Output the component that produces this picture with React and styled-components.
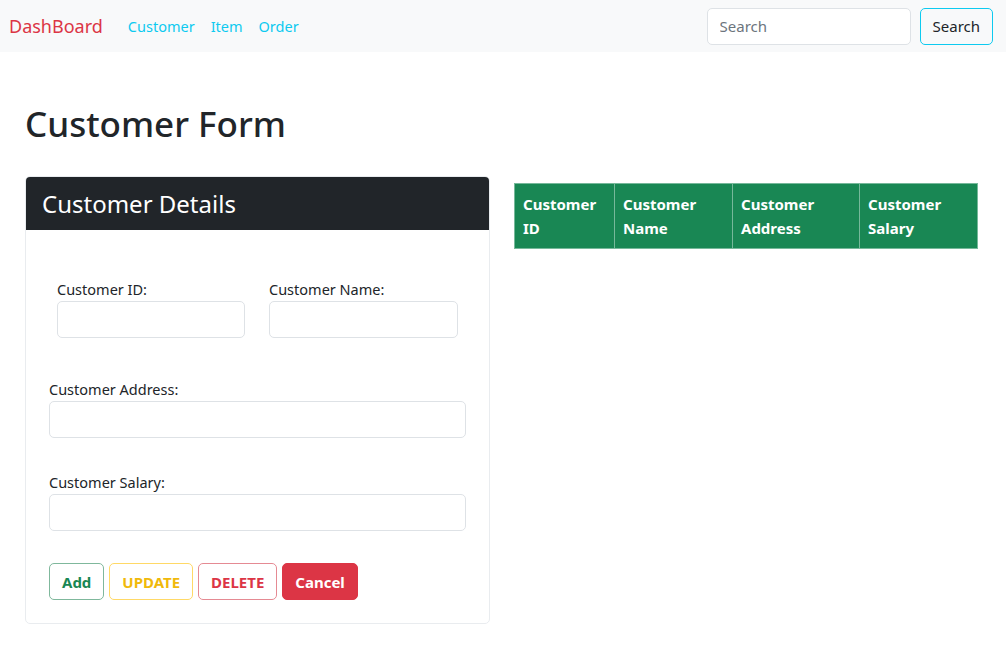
import React from 'react';
import styled, { createGlobalStyle } from 'styled-components';

const GlobalStyle = createGlobalStyle`
    * { box-sizing: border-box; }
    body {
        margin: 0;
        font-family: 'Noto Sans', 'Open Sans', sans-serif;
        color: #212529;
        background: #fff;
        font-size: 16px;
    }
`;

const fields = [
    { id: 'cid', label: 'Customer ID:' },
    { id: 'cname', label: 'Customer Name:' },
];

const columns = [
    ['Customer', 'ID', 100],
    ['Customer', 'Name', 118],
    ['Customer', 'Address', 127],
    ['Customer', 'Salary', 118],
];

const App = () => (
    <>
        <GlobalStyle />
        <NavBar>
            <Brand>DashBoard</Brand>
            <NavLinks>
                <NavLink>Customer</NavLink>
                <NavLink>Item</NavLink>
                <NavLink>Order</NavLink>
            </NavLinks>
            <SearchForm>
                <SearchInput placeholder="Search" />
                <SearchButton>Search</SearchButton>
            </SearchForm>
        </NavBar>

        <Main>
            <Title>Customer Form</Title>
            <Content>
                <Card>
                    <CardHeader>Customer Details</CardHeader>
                    <CardBody>
                        <TwoCols>
                            {fields.map((f) => (
                                <Field key={f.id}>
                                    <Label>{f.label}</Label>
                                    <Input />
                                </Field>
                            ))}
                        </TwoCols>
                        <Field space={34}>
                            <Label>Customer Address:</Label>
                            <Input />
                        </Field>
                        <Field space={32}>
                            <Label>Customer Salary:</Label>
                            <Input />
                        </Field>
                        <Buttons>
                            <Btn variant="success">Add</Btn>
                            <Btn variant="warning">UPDATE</Btn>
                            <Btn variant="danger">DELETE</Btn>
                            <Btn variant="danger" solid>
                                Cancel
                            </Btn>
                        </Buttons>
                    </CardBody>
                </Card>

                <Table>
                    <thead>
                        <tr>
                            {columns.map(([a, b, w]) => (
                                <Th key={b} style={{ width: w }}>
                                    {a}
                                    <br />
                                    {b}
                                </Th>
                            ))}
                        </tr>
                    </thead>
                </Table>
            </Content>
        </Main>
    </>
);

const NavBar = styled.nav`
    height: 52px;
    background: #f8f9fa;
    display: flex;
    align-items: center;
    padding: 0 13px 0 9px;
`;

const Brand = styled.span`
    color: #dc3545;
    font-size: 18px;
    margin-right: 25px;
`;

const NavLinks = styled.div`
    display: flex;
    gap: 16px;
    flex: 1;
`;

const NavLink = styled.a`
    color: #0dcaf0;
    font-size: 14.5px;
    cursor: pointer;
`;

const SearchForm = styled.div`
    display: flex;
    gap: 9px;
`;

const SearchInput = styled.input`
    width: 204px;
    height: 37px;
    border: 1px solid #dee2e6;
    border-radius: 5px;
    padding: 0 12px;
    font: inherit;
    font-size: 15px;
    &::placeholder { color: #6c757d; }
`;

const SearchButton = styled.button`
    height: 37px;
    padding: 0 12px;
    background: transparent;
    border: 1px solid #0dcaf0;
    border-radius: 5px;
    font: inherit;
    font-size: 15px;
    color: #212529;
`;

const Main = styled.main`
    padding: 51px 25px 0;
`;

const Title = styled.h1`
    margin: 0 0 31px;
    font-size: 35px;
    font-weight: 500;
    line-height: 1.2;
`;

const Content = styled.div`
    display: flex;
    align-items: flex-start;
    gap: 24px;
`;

const Card = styled.section`
    width: 465px;
    border: 1px solid #e9ecef;
    border-radius: 5px;
    overflow: hidden;
`;

const CardHeader = styled.div`
    background: #212529;
    color: #fff;
    font-size: 24px;
    height: 53px;
    display: flex;
    align-items: center;
    padding: 0 16px;
`;

const CardBody = styled.div`
    padding: 49px 23px 23px;
`;

const TwoCols = styled.div`
    display: grid;
    grid-template-columns: 188px 189px;
    gap: 24px;
    padding: 0 8px;
    margin-bottom: 41px;
`;

const Field = styled.div`
    display: flex;
    flex-direction: column;
    margin-bottom: ${(p) => p.space || 0}px;
`;

const Label = styled.label`
    font-size: 14.5px;
    margin-bottom: 2px;
`;

const Input = styled.input`
    height: 37px;
    border: 1px solid #dee2e6;
    border-radius: 5px;
    padding: 0 12px;
    font: inherit;
`;

const colors = {
    success: ['#198754', '#7fb89c'],
    warning: ['#f0b90b', '#ffd966'],
    danger: ['#dc3545', '#e58a93'],
};

const Buttons = styled.div`
    display: flex;
    gap: 5px;
`;

const Btn = styled.button`
    height: 37px;
    padding: 0 12px;
    border-radius: 5px;
    font: inherit;
    font-weight: 700;
    font-size: 15px;
    border: 1px solid ${(p) => (p.solid ? colors[p.variant][0] : colors[p.variant][1])};
    background: ${(p) => (p.solid ? colors[p.variant][0] : '#fff')};
    color: ${(p) => (p.solid ? '#fff' : colors[p.variant][0])};
`;

const Table = styled.table`
    margin-top: 7px;
    border-collapse: collapse;
    background: #198754;
    color: #fff;
`;

const Th = styled.th`
    text-align: left;
    vertical-align: top;
    font-size: 15px;
    font-weight: 700;
    line-height: 24px;
    padding: 8px 8px;
    border: 1px solid #76b89a;
`;

export default App;
